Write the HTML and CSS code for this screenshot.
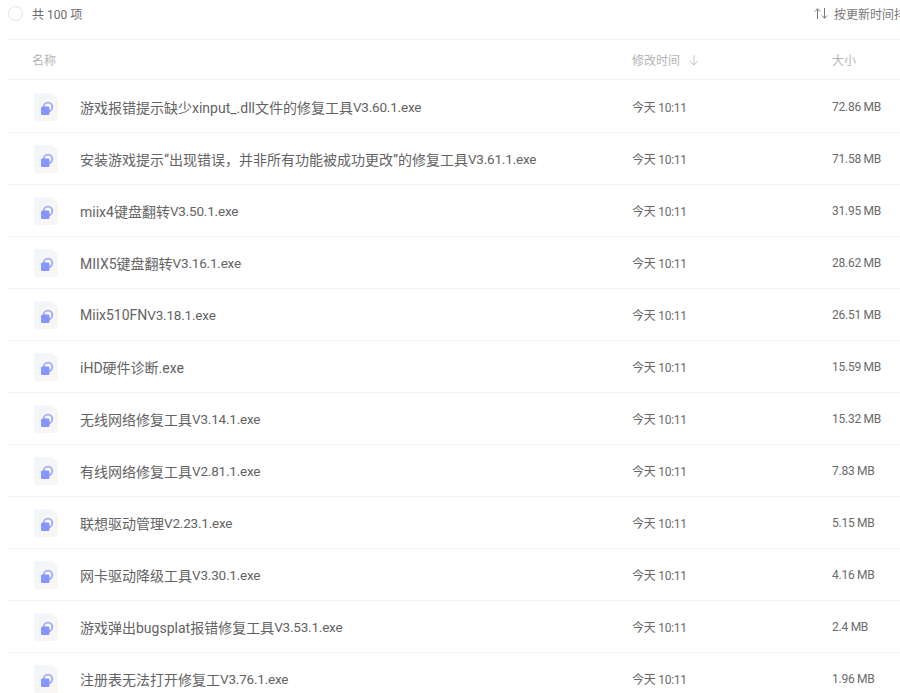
FILE: index.html
```html
<!DOCTYPE html>
<html lang="zh-CN">
<head>
<meta charset="utf-8">
<title>文件列表</title>
<link rel="stylesheet" href="styles.css">
</head>
<body>
<svg class="defs" width="0" height="0" aria-hidden="true">
  <defs>
    <linearGradient id="docbg" x1="0" y1="0" x2="1" y2="1">
      <stop offset="0" stop-color="#f1f5fc"/>
      <stop offset="1" stop-color="#faf6f2"/>
    </linearGradient>
    <symbol id="exe" viewBox="0 0 24 28">
      <path d="M3 0H18L24 6V25a3 3 0 0 1-3 3H3a3 3 0 0 1-3-3V3a3 3 0 0 1 3-3Z" fill="url(#docbg)"/>
      <circle cx="14" cy="14" r="4.300" fill="none" stroke="#9dabfa" stroke-width="1.800"/>
      <rect x="7" y="13.500" width="8.500" height="8.500" rx="1.500" fill="#8496fa"/>
    </symbol>
  </defs>
</svg>
<main class="page">
  <div class="topbar">
    <div class="count"><span class="radio"></span><span>共 100 项</span></div>
    <div class="sort">
      <svg class="sort-icon" viewBox="0 0 14 11" width="14" height="11" fill="none" stroke="#777" stroke-width="1"><path d="M3.500 11V.8M.8 3.500 3.500.8 6.200 3.500M10.500 0v10.200M7.800 7.500l2.700 2.700 2.700-2.700"/></svg>
      <span>按更新时间排序</span>
    </div>
  </div>
  <div class="row head">
    <div class="c-name">名称</div>
    <div class="c-time">修改时间<svg class="arrow" viewBox="0 0 10 12" width="10" height="12" fill="none" stroke="#c4c4c4" stroke-width="1"><path d="M5 1v10M1 7l4 4 4-4"/></svg></div>
    <div class="c-size">大小</div>
  </div>
  <div class="row item"><div class="c-name"><svg class="file"><use href="#exe"/></svg>游戏报错提示缺少xinput_.dll文件的修复工具<span class="ver">V3.60.1.exe</span></div><div class="c-time">今天 10:11</div><div class="c-size">72.86 MB</div></div>
  <div class="row item"><div class="c-name"><svg class="file"><use href="#exe"/></svg>安装游戏提示“出现错误，并非所有功能被成功更改”的修复工具<span class="ver">V3.61.1.exe</span></div><div class="c-time">今天 10:11</div><div class="c-size">71.58 MB</div></div>
  <div class="row item"><div class="c-name"><svg class="file"><use href="#exe"/></svg>miix4键盘翻转<span class="ver">V3.50.1.exe</span></div><div class="c-time">今天 10:11</div><div class="c-size">31.95 MB</div></div>
  <div class="row item"><div class="c-name"><svg class="file"><use href="#exe"/></svg>MIIX5键盘翻转<span class="ver">V3.16.1.exe</span></div><div class="c-time">今天 10:11</div><div class="c-size">28.62 MB</div></div>
  <div class="row item"><div class="c-name"><svg class="file"><use href="#exe"/></svg>Miix510FN<span class="ver">V3.18.1.exe</span></div><div class="c-time">今天 10:11</div><div class="c-size">26.51 MB</div></div>
  <div class="row item"><div class="c-name"><svg class="file"><use href="#exe"/></svg>iHD硬件诊断.exe</div><div class="c-time">今天 10:11</div><div class="c-size">15.59 MB</div></div>
  <div class="row item"><div class="c-name"><svg class="file"><use href="#exe"/></svg>无线网络修复工具<span class="ver">V3.14.1.exe</span></div><div class="c-time">今天 10:11</div><div class="c-size">15.32 MB</div></div>
  <div class="row item"><div class="c-name"><svg class="file"><use href="#exe"/></svg>有线网络修复工具<span class="ver">V2.81.1.exe</span></div><div class="c-time">今天 10:11</div><div class="c-size">7.83 MB</div></div>
  <div class="row item"><div class="c-name"><svg class="file"><use href="#exe"/></svg>联想驱动管理<span class="ver">V2.23.1.exe</span></div><div class="c-time">今天 10:11</div><div class="c-size">5.15 MB</div></div>
  <div class="row item"><div class="c-name"><svg class="file"><use href="#exe"/></svg>网卡驱动降级工具<span class="ver">V3.30.1.exe</span></div><div class="c-time">今天 10:11</div><div class="c-size">4.16 MB</div></div>
  <div class="row item"><div class="c-name"><svg class="file"><use href="#exe"/></svg>游戏弹出bugsplat报错修复工具<span class="ver">V3.53.1.exe</span></div><div class="c-time">今天 10:11</div><div class="c-size">2.4 MB</div></div>
  <div class="row item"><div class="c-name"><svg class="file"><use href="#exe"/></svg>注册表无法打开修复工<span class="ver">V3.76.1.exe</span></div><div class="c-time">今天 10:11</div><div class="c-size">1.96 MB</div></div>
</main>
</body>
</html>
```
FILE: styles.css
```css
html, body {
  margin: 0;
  height: 693px;
  overflow: hidden;
  background: #fff;
}
.defs { position: absolute; }
.page {
  width: 892px;
  margin-left: 8px;
  font-family: Roboto, "Noto Sans CJK SC", sans-serif;
  font-size: 12px;
  color: #6a6a6a;
}
.topbar {
  height: 40px;
  box-sizing: border-box;
  padding-bottom: 12px;
  display: flex;
  align-items: center;
  justify-content: space-between;
  border-bottom: 1px solid #f4f4f4;
  white-space: nowrap;
}
.count { display: flex; align-items: center; gap: 9px; }
.radio {
  width: 13px;
  height: 13px;
  border: 1.500px solid #e3e3e3;
  border-radius: 50%;
}
.sort {
  display: flex;
  align-items: center;
  gap: 6px;
  width: 86px;
  margin-left: auto;
  color: #777;
}
.sort-icon { flex: none; }
.row {
  display: flex;
  align-items: center;
  border-bottom: 1px solid #f4f4f4;
  box-sizing: border-box;
  white-space: nowrap;
}
.head {
  height: 40px;
  margin-bottom: 1px;
  color: #b4b4b4;
}
.item { height: 52px; }
.c-name {
  width: 624px;
  display: flex;
  align-items: center;
  padding-left: 26px;
  box-sizing: border-box;
  color: #636363;
  font-size: 14px;
}
.ver { font-size: 13.500px; letter-spacing: -0.2px; }
.head .c-name { padding-left: 24px; color: #b4b4b4; font-size: 12px; }
.c-time { width: 200px; display: flex; align-items: center; gap: 9px; }
.c-size { width: 68px; }
.item .c-time, .item .c-size { letter-spacing: -0.25px; }
.item .c-size { padding-top: 1px; }
.file {
  width: 24px;
  height: 28px;
  margin-right: 22px;
  flex: none;
}
```
